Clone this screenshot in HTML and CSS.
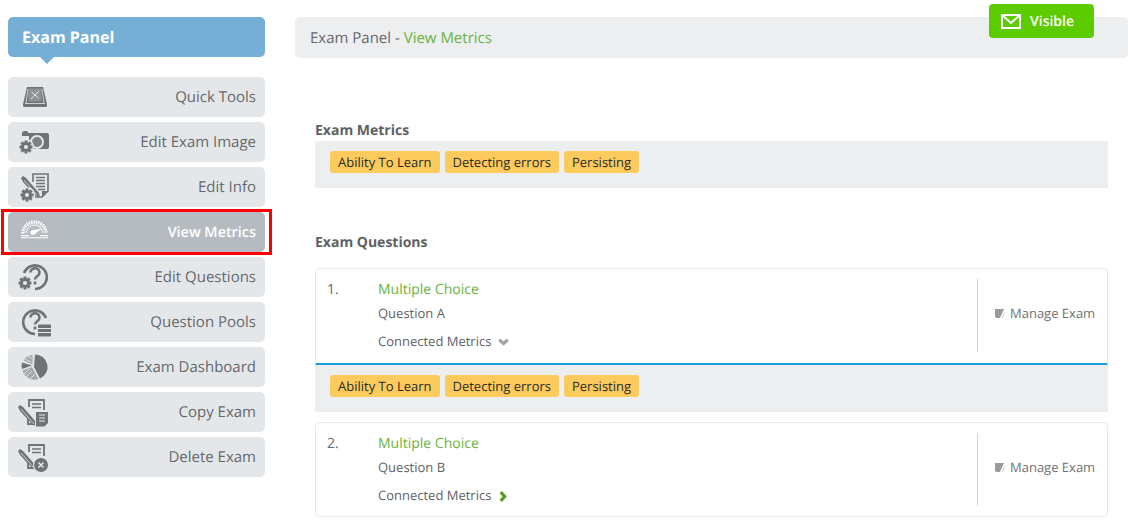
FILE: index.html
```html
<!DOCTYPE html>
<html lang="en">
<head>
<meta charset="utf-8">
<title>Exam Panel - View Metrics</title>
<link rel="stylesheet" href="styles.css">
</head>
<body>
<svg width="0" height="0" class="defs">
  <defs>
    <g id="gear">
      <circle cx="0" cy="0" r="8" fill="#e4e7ea"/>
      <circle cx="0" cy="0" r="3.600" fill="none" stroke="#6f7276" stroke-width="3"/>
      <path d="M-1.500-6.500h3v2h-3zM-1.500 4.500h3v2h-3zM-6.500-1.500h2v3h-2zM4.500-1.500h2v3h-2z" fill="#6f7276"/>
      <path d="M-1.500-6.500h3v2h-3zM-1.500 4.500h3v2h-3zM-6.500-1.500h2v3h-2zM4.500-1.500h2v3h-2z" fill="#6f7276" transform="rotate(45)"/>
    </g>
    <g id="pen">
      <path d="M0 2l2-2 3 2 13 15 1 4-4-1L2 6z" fill="#6f7276"/>
      <path d="M3 4l13 15" stroke="#e4e7ea" stroke-width=".8" fill="none"/>
    </g>
    <path id="qmark" d="M11.500 10.500a4.500 4.300 0 1 1 7 3.500c-1.800 1.200-2.500 1.800-2.500 3.500M16 19.500v3" fill="none" stroke="#6f7276" stroke-width="2.600"/>
  </defs>
</svg>
<div class="app">
  <aside class="sidebar">
    <div class="panel-head">Exam Panel</div>
    <nav class="menu">
      <a class="item">
        <svg class="ico" viewBox="0 0 32 28"><path d="M8 4h16l4 17v2l-1 1H5l-1-1v-2z" fill="#6f7276"/><path d="M9.500 5.500h13v13h-13z" fill="#8f9296"/><path d="M7 20L9 6M25 20L23 6M6 20.500h20" stroke="#e4e7ea" stroke-width=".8" fill="none"/><path d="M12 16l8-8M12.500 9l7 6" stroke="#e4e7ea" fill="none"/></svg>
        <span>Quick Tools</span>
      </a>
      <a class="item">
        <svg class="ico" viewBox="0 0 32 28"><path d="M3 8V4.500L5 3h3l1.500 2H28a2 2 0 0 1 2 2v12a2 2 0 0 1-2 2H10V8z" fill="#6f7276"/><circle cx="18" cy="14" r="6" fill="#7d8084" stroke="#e4e7ea" stroke-width="2"/><use href="#gear" x="7" y="19"/></svg>
        <span>Edit Exam Image</span>
      </a>
      <a class="item">
        <svg class="ico" viewBox="0 0 32 28"><path d="M14 9V1h15v17l-6 6h-7" fill="none" stroke="#6f7276" stroke-width="1.600"/><path d="M29 18h-6v6" fill="#6f7276"/><path d="M17 4.500h9M17 7.500h9M17 10.500h9M17 13.500h9M19 16.500h7" stroke="#6f7276" stroke-width="1.500" fill="none"/><use href="#pen" x="2" y="3"/><use href="#gear" x="8" y="22"/></svg>
        <span>Edit Info</span>
      </a>
      <a class="item active">
        <svg class="ico" viewBox="0 0 32 28"><path d="M4 15.500a11.500 11.500 0 0 1 23 0" fill="none" stroke="#fff" stroke-width="3.500" stroke-dasharray="1.500 .9"/><path d="M7.500 15a8 8 0 0 1 16 0" fill="none" stroke="#fff" stroke-width="1"/><path d="M2 17h8v1.200H2zM21 17h8v1.200h-8zM2 19.200h27v1H2z" fill="#fff"/><path d="M12.500 12.500L23 10.500l-8 6z" fill="#fff"/><circle cx="14" cy="14.500" r="2.500" fill="#fff"/></svg>
        <span>View Metrics</span>
      </a>
      <a class="item">
        <svg class="ico" viewBox="0 0 32 28"><path d="M5 10a11.800 11.800 0 1 1 11 16" fill="none" stroke="#6f7276" stroke-width="2.600"/><use href="#qmark" y="-1"/><use href="#gear" x="6" y="20"/></svg>
        <span>Edit Questions</span>
      </a>
      <a class="item">
        <svg class="ico" viewBox="0 0 32 28"><path d="M16 26a11.800 11.800 0 1 1 11-16" fill="none" stroke="#6f7276" stroke-width="2.600"/><use href="#qmark" y="-1"/><path d="M18 15h15v15H18z" fill="#e4e7ea"/><path d="M19 17.500a1 1 0 0 1 1-1h11a1 1 0 0 1 1 1v2.500H19zM19 21h13v3H19zM19 25h13v2.500a1 1 0 0 1-1 1H20a1 1 0 0 1-1-1z" fill="#6f7276"/></svg>
        <span>Question Pools</span>
      </a>
      <a class="item">
        <svg class="ico" viewBox="0 0 32 28"><path d="M16 1.500a12.500 12.500 0 0 1 5 24L15 14z" fill="#6f7276"/><path d="M13.500 1.800a12.500 12.500 0 0 0-9 5.700l9 4z" fill="#a4a7ab"/><path d="M3 9.500l10 3-10 3.500a12 12 0 0 1 0-6.500z" fill="#6f7276"/><path d="M3.500 17.500l9.500-3.500 6.500 12a12.500 12.500 0 0 1-16-8.500z" fill="#a4a7ab"/><path d="M6 6l6 3M9 3.500l4 2M5 21l6-5M7 24l6-6M11 26l5-5" stroke="#e4e7ea" stroke-width=".9" fill="none"/></svg>
        <span>Exam Dashboard</span>
      </a>
      <a class="item">
        <svg class="ico" viewBox="0 0 32 28"><path d="M10 9V2h15v10" fill="none" stroke="#6f7276" stroke-width="1.800"/><path d="M9 19v7h7" fill="none" stroke="#6f7276" stroke-width="1.800"/><path d="M13 6h9M13 9.500h9" stroke="#6f7276" stroke-width="1.500"/><use href="#pen" x="-1" y="7"/><path d="M16 13h14v12l-4 4H16z" fill="#e4e7ea"/><path d="M17 14h12v11l-3.500 3.500H17z" fill="#6f7276"/><path d="M20 17h6M20 20h6M20 23h6" stroke="#e4e7ea"/></svg>
        <span>Copy Exam</span>
      </a>
      <a class="item">
        <svg class="ico" viewBox="0 0 32 28"><path d="M10 9V2h15v11" fill="none" stroke="#6f7276" stroke-width="1.800"/><path d="M9 19v6h7" fill="none" stroke="#6f7276" stroke-width="1.800"/><path d="M13 6h9M13 9.500h9" stroke="#6f7276" stroke-width="1.500"/><use href="#pen" x="-1" y="6"/><circle cx="22" cy="22" r="8" fill="#e4e7ea"/><circle cx="22" cy="22" r="7" fill="#6f7276"/><path d="M19.500 19.500l5 5m0-5l-5 5" stroke="#e4e7ea" stroke-width="1.500"/></svg>
        <span>Delete Exam</span>
      </a>
    </nav>
    <div class="highlight"></div>
  </aside>
  <main class="content">
    <div class="topbar">Exam Panel - <span class="green">View Metrics</span></div>
    <a class="visible">
      <svg class="mail" viewBox="0 0 20 15"><path d="M1 1h18v13H1z" fill="none" stroke="#fff" stroke-width="2"/><path d="M1 1l9 8 9-8" fill="none" stroke="#fff" stroke-width="2"/></svg>
      <span>Visible</span>
    </a>
    <section class="body">
      <h2 class="h-metrics">Exam Metrics</h2>
      <div class="tags">
        <span class="tag">Ability To Learn</span><span class="tag">Detecting errors</span><span class="tag">Persisting</span>
      </div>
      <h2 class="h-questions">Exam Questions</h2>
      <div class="card first">
        <div class="num">1.</div>
        <div class="info">
          <div class="title">Multiple Choice</div>
          <div class="q">Question A</div>
          <div class="conn">Connected Metrics
            <svg class="chev" viewBox="0 0 12 8"><path d="M2 1.500l4 3.500 4-3.500" fill="none" stroke="#a6a6a6" stroke-width="3"/></svg>
          </div>
        </div>
        <div class="manage">
          <svg class="edit" viewBox="0 0 10 10"><path d="M0 0h9L5 9H1.500L0 8z" fill="#9b9b9b"/><path d="M9.500 1.500L6 9.500" stroke="#fff"/><path d="M9.500 3.500L7 9.500" stroke="#c9c9c9"/></svg>
          <span>Manage Exam</span>
        </div>
      </div>
      <div class="tags open">
        <span class="tag">Ability To Learn</span><span class="tag">Detecting errors</span><span class="tag">Persisting</span>
      </div>
      <div class="card second">
        <div class="num">2.</div>
        <div class="info">
          <div class="title">Multiple Choice</div>
          <div class="q">Question B</div>
          <div class="conn">Connected Metrics
            <svg class="chev right" viewBox="0 0 8 12"><path d="M1.500 2l3.500 4-3.500 4" fill="none" stroke="#5c9e1f" stroke-width="3"/></svg>
          </div>
        </div>
        <div class="manage">
          <svg class="edit" viewBox="0 0 10 10"><path d="M0 0h9L5 9H1.500L0 8z" fill="#9b9b9b"/><path d="M9.500 1.500L6 9.500" stroke="#fff"/><path d="M9.500 3.500L7 9.500" stroke="#c9c9c9"/></svg>
          <span>Manage Exam</span>
        </div>
      </div>
    </section>
  </main>
</div>
</body>
</html>
```
FILE: styles.css
```css
* { box-sizing: border-box; }
html, body { margin: 0; padding: 0; background: #fff; }
body { font-family: "Open Sans", "Liberation Sans", sans-serif; color: #5f6164; overflow: hidden; height: 526px; text-rendering: geometricPrecision; }
.defs { position: absolute; }
.app { display: flex; padding-top: 17px; }

.sidebar { width: 257px; margin-left: 8px; flex: none; position: relative; }
.panel-head { position: relative; height: 40px; border-radius: 5px; background: #75afd6; color: #fff; font-size: 16px; font-weight: 700; line-height: 40px; padding-left: 14px; }
.panel-head::after { content: ""; position: absolute; left: 32px; top: 40px; border: 7px solid transparent; border-top-color: #75afd6; border-bottom: 0; }
.menu { display: flex; flex-direction: column; gap: 5px; margin-top: 20px; }
.item { display: flex; align-items: center; justify-content: space-between; height: 40px; border-radius: 5px; background: #e4e7ea; padding: 0 9px 0 11px; font-size: 15px; color: #66686b; }
.item.active { background: #b6bbc2; color: #fff; font-weight: 600; font-size: 14.400px; }
.ico { width: 32px; height: 28px; flex: none; overflow: visible; }
.highlight { position: absolute; left: -7px; top: 192px; width: 271px; height: 46px; border: 3px solid #f00; }

.content { flex: 1; margin-left: 30px; position: relative; min-width: 0; }
.topbar { height: 41px; background: #edeef0; border-radius: 5px; font-size: 15px; line-height: 43px; padding-left: 15px; color: #66686b; }
.green { color: #6cb33f; }
.visible { position: absolute; left: 694px; top: -13px; width: 105px; height: 34px; background: #5ccc00; border-radius: 4px; color: #fff; font-size: 14px; font-weight: 600; display: flex; align-items: center; gap: 9px; padding-left: 12px; }
.mail { width: 20px; height: 15px; }

.body { padding: 0 20px; }
h2 { margin: 0; font-size: 14px; font-weight: 700; color: #5f6164; line-height: 20px; }
.h-metrics { margin-top: 63px; }
.h-questions { margin-top: 45px; }
.tags { display: flex; gap: 5px; height: 47px; background: #edeef0; padding: 10px 15px; }
.tag { height: 22px; line-height: 22px; padding: 0 8px; background: #fdcb5d; border-radius: 3px; color: #2a2a2a; font-size: 13px; }

.card { display: flex; margin-top: 16px; border: 1px solid #e9eaeb; background: #fff; }
.card.first { height: 97px; margin-top: 15px; border-bottom: 2px solid #1d9fe3; border-radius: 4px 4px 0 0; }
.card.second { height: 95px; margin-top: 10px; border-radius: 4px; }
.num { width: 62px; flex: none; padding: 11px 0 0 11px; font-size: 14px; line-height: 20px; color: #66686b; }
.info { flex: 1; padding-top: 11px; }
.title { font-size: 14px; line-height: 20px; color: #6cb33f; }
.q { font-size: 13px; line-height: 18px; margin-top: 4px; }
.conn { font-size: 13px; line-height: 18px; margin-top: 10px; display: flex; align-items: center; gap: 6px; }
.chev { width: 13px; height: 9px; margin-top: 3px; }
.chev.right { width: 9px; height: 13px; margin-top: 2px; margin-left: 2px; }
.manage { width: 130px; flex: none; margin: 10px 0; border-left: 1px solid #d3d4d5; display: flex; align-items: center; gap: 5px; padding: 0 0 5px 17px; font-size: 13px; color: #707275; }
.card.first .manage { margin-bottom: 11px; }
.edit { width: 10px; height: 10px; margin-top: 1px; }
```
